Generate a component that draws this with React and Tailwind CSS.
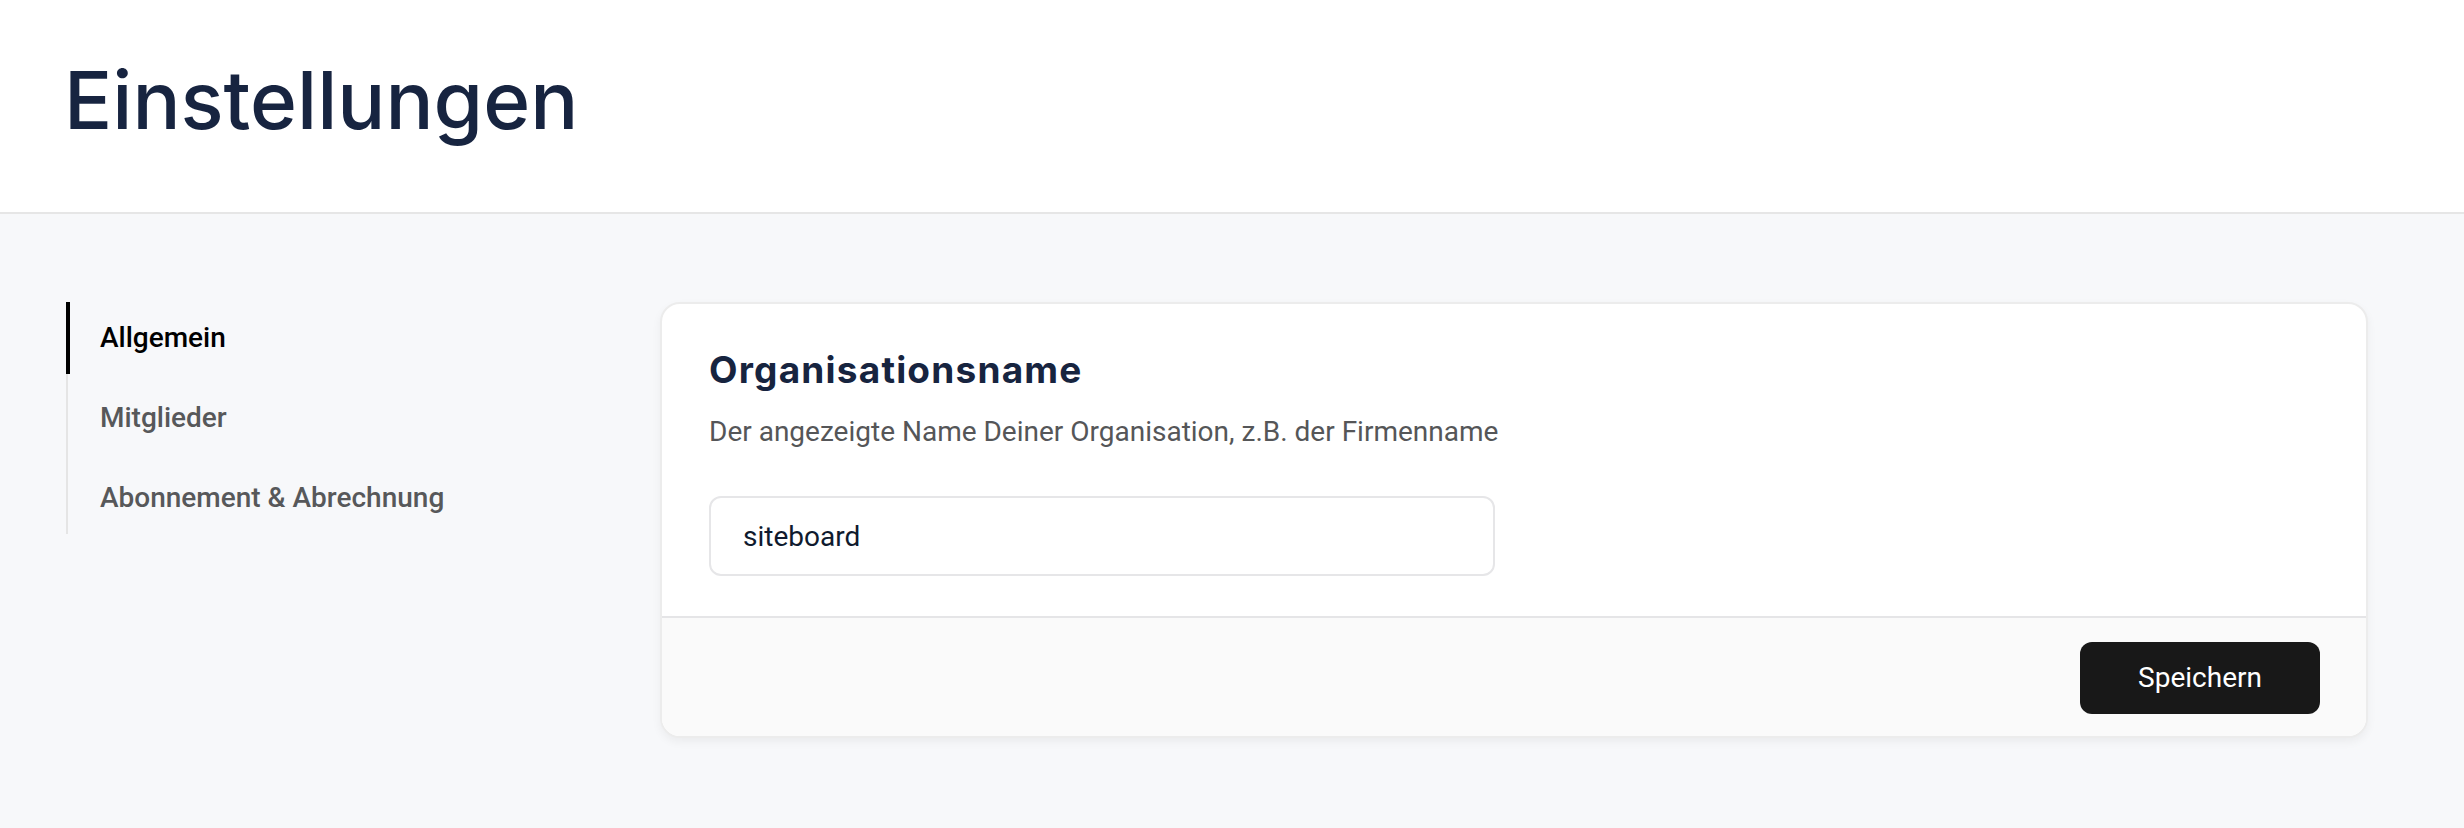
import React, { useState } from 'react';

const NAV_ITEMS = ['Allgemein', 'Mitglieder', 'Abonnement & Abrechnung'];

const App = () => {
  const [active, setActive] = useState('Allgemein');
  const [orgName, setOrgName] = useState('siteboard');

  return (
    <div className="min-h-screen w-full bg-[#f7f8fa] font-['Roboto',sans-serif]">
      {/* Page header */}
      <header className="h-[214px] bg-white border-b-2 border-[#e6e6e6] px-[64px] pt-[52px]">
        <h1 className="font-['Inter',sans-serif] text-[80px] leading-[96px] font-medium text-[#172440]">Einstellungen</h1>
      </header>

      <main className="flex pt-[88px] pl-[66px] pr-[96px]">
        {/* Settings navigation */}
        <nav className="w-[594px] shrink-0">
          <ul className="w-fit min-w-[420px] border-l-2 border-[#e5e5e5] flex flex-col gap-[8px]">
            {NAV_ITEMS.map((item) => (
              <li key={item}>
                <button
                  type="button"
                  onClick={() => setActive(item)}
                  className={`-ml-[2px] block border-l-4 pl-[30px] py-[16px] text-left text-[28px] leading-[40px] font-medium ${
                    active === item ? 'border-black text-black' : 'border-transparent text-[#57585a]'
                  }`}
                >
                  {item}
                </button>
              </li>
            ))}
          </ul>
        </nav>

        {/* General settings card */}
        <section className="flex-1 bg-white rounded-[20px] border-2 border-[#ececec] shadow-[0_4px_10px_rgba(0,0,0,0.05)] overflow-hidden">
          <div className="px-[47px] pt-[42px] pb-[40px]">
            <h2 className="font-['Inter',sans-serif] text-[37px] leading-[48px] tracking-[1.2px] font-bold text-[#17243f]">Organisationsname</h2>
            <p className="mt-[18px] text-[28px] leading-[40px] text-[#555658]">
              Der angezeigte Name Deiner Organisation, z.B. der Firmenname
            </p>
            <input
              type="text"
              value={orgName}
              onChange={(e) => setOrgName(e.target.value)}
              className="mt-[44px] block w-[786px] h-[80px] rounded-[12px] border-2 border-[#e6e6e8] bg-white px-[32px] text-[28px] text-[#0f1a2e] focus:outline-none"
            />
          </div>
          <div className="border-t-2 border-[#e5e5e7] bg-[#fafafa] flex justify-end px-[46px] pt-[24px] pb-[22px]">
            <button
              type="button"
              className="w-[240px] h-[72px] rounded-[12px] bg-[#181818] text-white text-[28px]"
            >
              Speichern
            </button>
          </div>
        </section>
      </main>
    </div>
  );
};

export default App;
